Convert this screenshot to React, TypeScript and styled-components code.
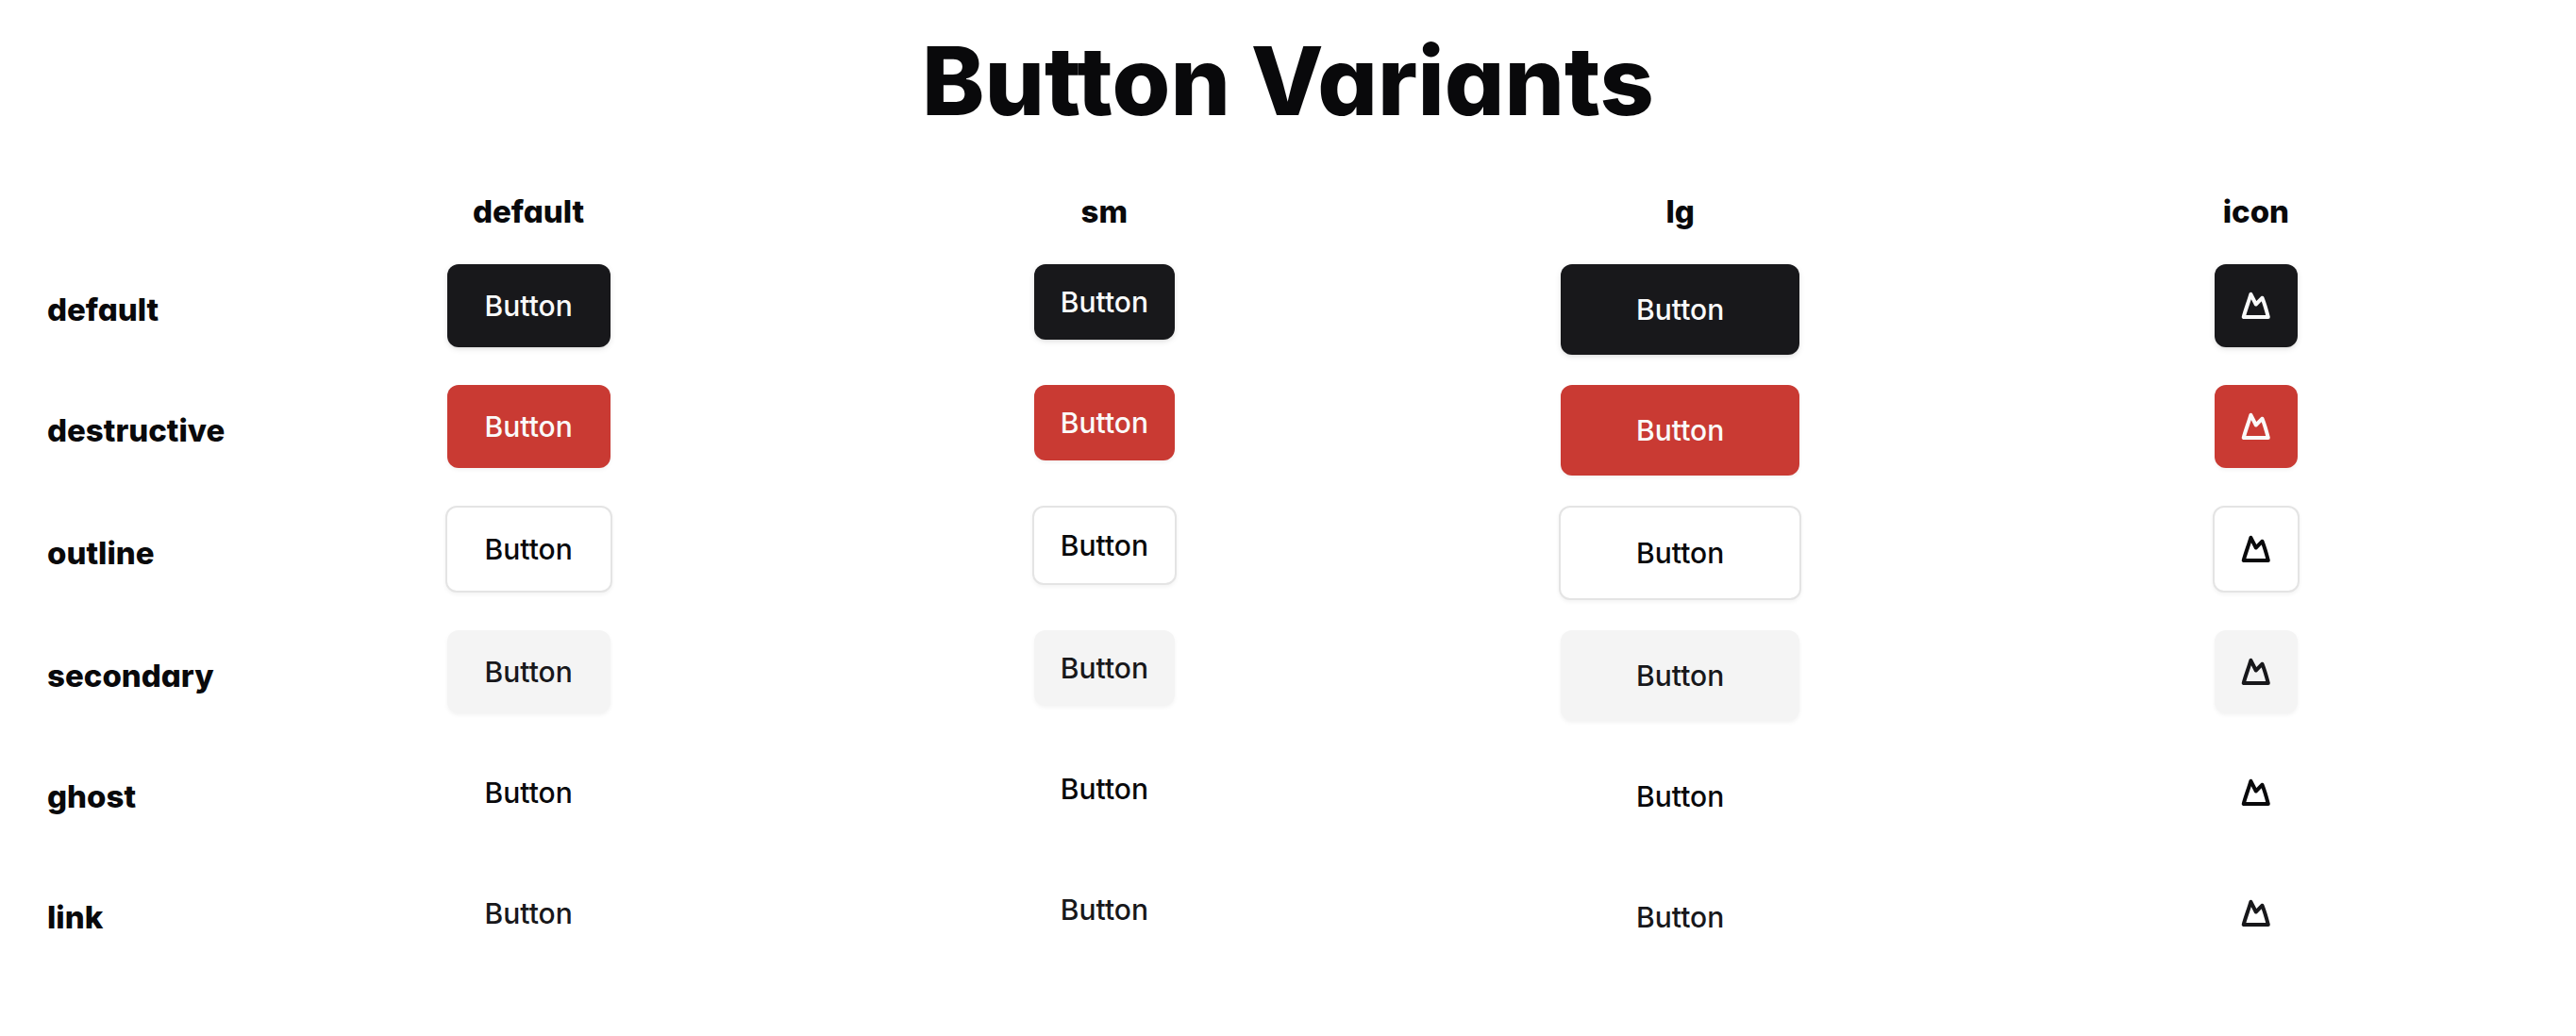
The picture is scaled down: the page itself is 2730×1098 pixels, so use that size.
import React from "react";
import styled, { createGlobalStyle, css } from "styled-components";

const GlobalStyle = createGlobalStyle`
  *, *::before, *::after { box-sizing: border-box; }
  body {
    margin: 0;
    background: #ffffff;
    color: #09090b;
    font-family: Inter, "Open Sans", sans-serif;
    font-feature-settings: "cv11";
    -webkit-font-smoothing: antialiased;
  }
`;

const variants = ["default", "destructive", "outline", "secondary", "ghost", "link"] as const;
const sizes = ["default", "sm", "lg", "icon"] as const;
type Variant = (typeof variants)[number];
type Size = (typeof sizes)[number];

const Page = styled.main`
  display: flex;
  flex-direction: column;
  gap: 68px;
  padding: 40px 50px;
`;

const Title = styled.h1`
  margin: 0;
  font-size: 100px;
  line-height: 92px;
  font-weight: 800;
  text-align: center;
`;

const Grid = styled.div`
  display: grid;
  grid-template-columns: 189px repeat(4, minmax(0, 1fr));
  gap: 32px;
`;

const Heading = styled.h2<{ $align?: "center" | "start" }>`
  margin: 0;
  align-self: center;
  font-size: 33px;
  line-height: 48px;
  font-weight: 800;
  text-align: ${({ $align = "start" }) => $align};
`;

const Cell = styled.div`
  display: flex;
  justify-content: center;
  align-items: flex-start;
`;

const variantStyles = {
  default: css`
    background: #18181b;
    color: #fafafa;
    box-shadow: 0 2px 6px rgba(0, 0, 0, 0.1), 0 2px 4px -2px rgba(0, 0, 0, 0.1);
  `,
  destructive: css`
    background: #c93a33;
    color: #fafafa;
    box-shadow: 0 2px 4px rgba(0, 0, 0, 0.05);
  `,
  outline: css`
    background: #ffffff;
    border: 2px solid #e4e4e4;
    box-sizing: content-box;
    box-shadow: 0 2px 4px rgba(0, 0, 0, 0.05);
  `,
  secondary: css`
    background: #f4f4f4;
    color: #18181b;
    box-shadow: 0 2px 4px rgba(0, 0, 0, 0.05);
  `,
  ghost: css``,
  link: css`
    color: #18181b;
  `,
};

const sizeStyles = {
  default: css`
    height: 88px;
    min-width: 173px;
  `,
  sm: css`
    height: 80px;
    min-width: 149px;
  `,
  lg: css`
    height: 96px;
    min-width: 253px;
  `,
  icon: css`
    height: 88px;
    min-width: 88px;
  `,
};

const Button = styled.button<{ $variant: Variant; $size: Size }>`
  display: inline-flex;
  align-items: center;
  justify-content: center;
  padding: 0;
  border: 0;
  border-radius: 12px;
  background: transparent;
  color: #09090b;
  font: inherit;
  font-feature-settings: inherit;
  font-size: 30px;
  line-height: 40px;
  font-weight: 500;
  white-space: nowrap;
  cursor: pointer;
  ${({ $size }) => sizeStyles[$size]}
  ${({ $variant }) => variantStyles[$variant]}
`;

const MountainIcon = () => (
  <svg width="32" height="32" viewBox="0 0 32 32" fill="none" stroke="currentColor" strokeWidth="4" strokeLinejoin="round" aria-hidden="true">
    <path d="M10.4 3.800 C8 12 5 19.500 2.700 28 H28.800 C27 21 25 14 22.500 7.700 L15.800 14.500 Z" />
  </svg>
);

export default function App() {
  return (
    <>
      <GlobalStyle />
      <Page>
        <Title>Button Variants</Title>
        <Grid>
          <span />
          {sizes.map((size) => (
            <Heading key={size} $align="center">
              {size}
            </Heading>
          ))}
          {variants.map((variant) => (
            <React.Fragment key={variant}>
              <Heading>{variant}</Heading>
              {sizes.map((size) => (
                <Cell key={size}>
                  <Button type="button" $variant={variant} $size={size} aria-label={size === "icon" ? variant : undefined}>
                    {size === "icon" ? <MountainIcon /> : "Button"}
                  </Button>
                </Cell>
              ))}
            </React.Fragment>
          ))}
        </Grid>
      </Page>
    </>
  );
}
